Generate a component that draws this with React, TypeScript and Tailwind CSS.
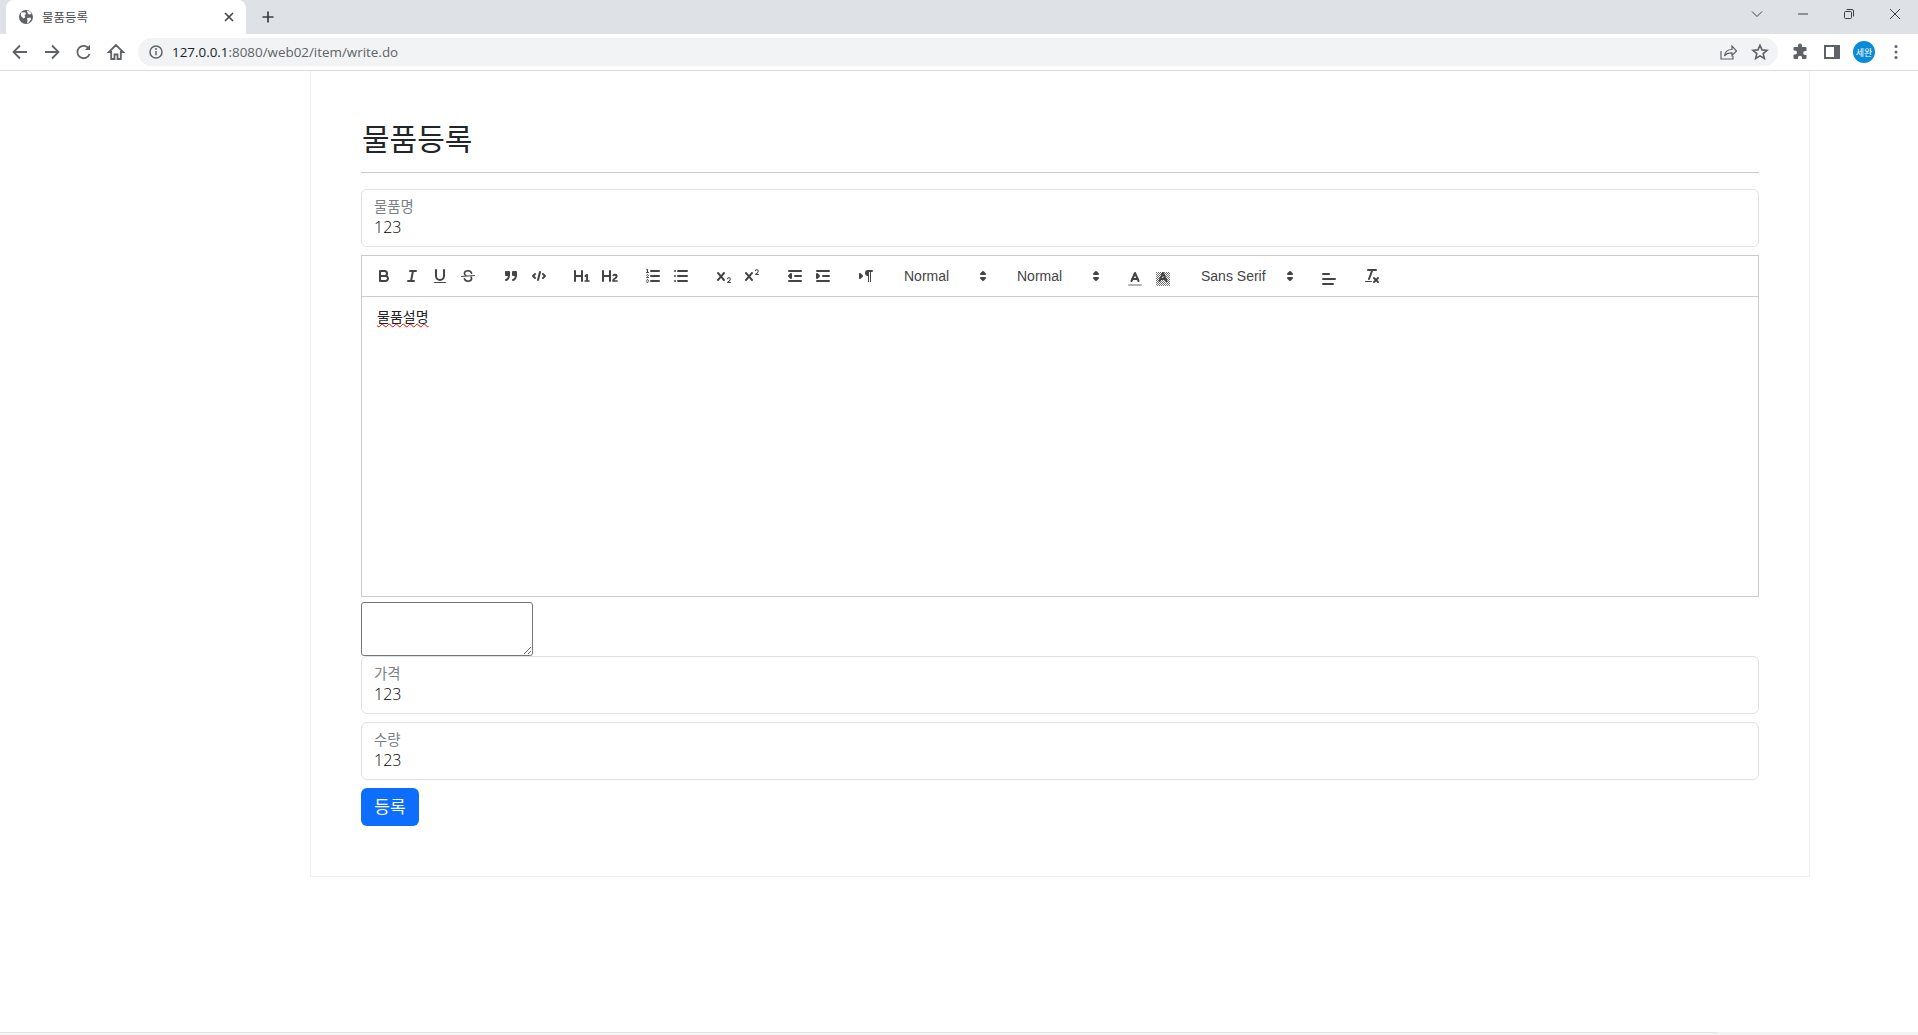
import React from "react";

const F = { fill: "#444", stroke: "none" };
const T = { strokeWidth: 1 };

const Q: Record<string, React.ReactNode> = {
  bold: (
    <>
      <path d="M5,4H9.5A2.5,2.5,0,0,1,12,6.5v0A2.5,2.5,0,0,1,9.5,9H5A0,0,0,0,1,5,9V4A0,0,0,0,1,5,4Z" />
      <path d="M5,9h5.5A2.5,2.5,0,0,1,13,11.5v0A2.5,2.5,0,0,1,10.5,14H5a0,0,0,0,1,0,0V9A0,0,0,0,1,5,9Z" />
    </>
  ),
  italic: (
    <>
      <line x1="7" x2="13" y1="4" y2="4" />
      <line x1="5" x2="11" y1="14" y2="14" />
      <line x1="8" x2="10" y1="14" y2="4" />
    </>
  ),
  underline: (
    <>
      <path d="M5,3V9a4.012,4.012,0,0,0,4,4H9a4.012,4.012,0,0,0,4-4V3" />
      <rect {...F} height="1" rx=".5" ry=".5" width="12" x="3" y="15" />
    </>
  ),
  strike: (
    <>
      <line {...T} x1="15.5" x2="2.5" y1="8.5" y2="9.5" />
      <path strokeWidth={1.6} d="M12.6 6.2C12.2 4.7 10.8 3.8 9 3.8 6.9 3.8 5.4 4.8 5.4 6.4c0 .9.5 1.6 1.3 2M5.4 11.8c.4 1.5 1.8 2.4 3.6 2.4 2.1 0 3.6-1 3.6-2.6 0-.6-.2-1.1-.6-1.6" />
    </>
  ),
  blockquote: (
    <>
      <rect fill="#444" height="3" width="3" x="4" y="5" />
      <rect fill="#444" height="3" width="3" x="11" y="5" />
      <path d="M7,8c0,4.031-3,5-3,5" />
      <path d="M14,8c0,4.031-3,5-3,5" />
    </>
  ),
  code: (
    <>
      <polyline points="5 7 3 9 5 11" />
      <polyline points="13 7 15 9 13 11" />
      <line x1="10" x2="8" y1="5" y2="13" />
    </>
  ),
  h1: (
    <path {...F} d="M10,4V14a1,1,0,0,1-2,0V10H3v4a1,1,0,0,1-2,0V4A1,1,0,0,1,3,4V8H8V4a1,1,0,0,1,2,0Zm6.06787,9.209H14.98975V7.59863a.54085.54085,0,0,0-.605-.60547h-.62744a1.01119,1.01119,0,0,0-.748.29688L11.645,8.56641a.5435.5435,0,0,0-.022.8584l.28613.30762a.53861.53861,0,0,0,.84717.0332l.09912-.08789a1.2137,1.2137,0,0,0,.2417-.35254h.02246s-.01123.30859-.01123.60547V13.209H12.041a.54085.54085,0,0,0-.605.60547v.43945a.54085.54085,0,0,0,.605.60547h4.02686a.54085.54085,0,0,0,.605-.60547v-.43945A.54085.54085,0,0,0,16.06787,13.209Z" />
  ),
  h2: (
    <path {...F} d="M16.73975,13.81445v.43945a.54085.54085,0,0,1-.605.60547H11.855a.58392.58392,0,0,1-.64893-.60547V14.0127c0-2.90527,3.39941-3.42187,3.39941-4.55469a.77675.77675,0,0,0-.84717-.78125,1.17684,1.17684,0,0,0-.83594.38477c-.2749.26367-.561.374-.85791.13184l-.4292-.34082c-.30811-.24219-.38525-.51758-.1543-.81445a2.97155,2.97155,0,0,1,2.45361-1.17676,2.45393,2.45393,0,0,1,2.68408,2.40918c0,2.45312-3.1792,2.92676-3.27832,3.93848h2.79443A.54085.54085,0,0,1,16.73975,13.81445ZM9,3A.99974.99974,0,0,0,8,4V8H3V4A1,1,0,0,0,1,4V14a1,1,0,0,0,2,0V10H8v4a1,1,0,0,0,2,0V4A.99974.99974,0,0,0,9,3Z" />
  ),
  ol: (
    <>
      <line x1="7" x2="15" y1="4" y2="4" />
      <line x1="7" x2="15" y1="9" y2="9" />
      <line x1="7" x2="15" y1="14" y2="14" />
      <line {...T} x1="2.5" x2="4.5" y1="5.5" y2="5.5" />
      <path {...F} d="M3.5,6A0.5,0.5,0,0,1,3,5.5V3.085l-0.276.138A0.5,0.5,0,0,1,2.053,3c-0.124-.247-0.023-0.324.224-0.447l1-.5A0.5,0.5,0,0,1,4,2.5v3A0.5,0.5,0,0,1,3.5,6Z" />
      <path {...T} d="M4.5,10.5h-2c0-.234,1.85-1.076,1.85-2.234A0.959,0.959,0,0,0,2.5,8.156" />
      <path {...T} d="M2.5,14.846a0.959,0.959,0,0,0,1.85-.109A0.7,0.7,0,0,0,3.75,14a0.688,0.688,0,0,0,.6-0.736,0.959,0.959,0,0,0-1.85-.109" />
    </>
  ),
  ul: (
    <>
      <line x1="6" x2="15" y1="4" y2="4" />
      <line x1="6" x2="15" y1="9" y2="9" />
      <line x1="6" x2="15" y1="14" y2="14" />
      <line x1="3" x2="3" y1="4" y2="4" />
      <line x1="3" x2="3" y1="9" y2="9" />
      <line x1="3" x2="3" y1="14" y2="14" />
    </>
  ),
  sub: (
    <>
      <path {...F} d="M15.5,15H13.861a3.858,3.858,0,0,0,1.914-2.975,1.8,1.8,0,0,0-1.6-1.751A1.921,1.921,0,0,0,12.021,11.7a0.50013,0.50013,0,1,0,.957.291h0a0.914,0.914,0,0,1,1.053-.725,0.81,0.81,0,0,1,.744.762c0,1.076-1.16971,1.86982-1.93971,2.43082A1.45639,1.45639,0,0,0,12,15.5a0.5,0.5,0,0,0,.5.5h3A0.5,0.5,0,0,0,15.5,15Z" />
      <path {...F} d="M9.65,5.241a1,1,0,0,0-1.409.108L6,7.964,3.759,5.349A1,1,0,0,0,2.192,6.59178Q2.21541,6.6213,2.241,6.649L4.684,9.5,2.241,12.35A1,1,0,0,0,3.71,13.70722q0.02557-.02768.049-0.05722L6,11.036,8.241,13.65a1,1,0,1,0,1.567-1.24277Q9.78459,12.3777,9.759,12.35L7.316,9.5,9.759,6.651A1,1,0,0,0,9.65,5.241Z" />
    </>
  ),
  sup: (
    <>
      <path {...F} d="M15.5,7H13.861a4.015,4.015,0,0,0,1.914-2.975,1.8,1.8,0,0,0-1.6-1.751A1.922,1.922,0,0,0,12.021,3.7a0.5,0.5,0,1,0,.957.291,0.917,0.917,0,0,1,1.053-.725,0.81,0.81,0,0,1,.744.762c0,1.077-1.164,1.925-1.934,2.486A1.423,1.423,0,0,0,12,7.5a0.5,0.5,0,0,0,.5.5h3A0.5,0.5,0,0,0,15.5,7Z" />
      <path {...F} d="M9.651,5.241a1,1,0,0,0-1.41.108L6,7.964,3.759,5.349a1,1,0,1,0-1.519,1.3L4.683,9.5,2.241,12.35a1,1,0,1,0,1.519,1.3L6,11.036,8.241,13.65a1,1,0,0,0,1.519-1.3L7.317,9.5,9.759,6.651A1,1,0,0,0,9.651,5.241Z" />
    </>
  ),
  outdent: (
    <>
      <line x1="3" x2="15" y1="14" y2="14" />
      <line x1="3" x2="15" y1="4" y2="4" />
      <line x1="9" x2="15" y1="9" y2="9" />
      <polyline fill="#444" strokeWidth={2} points="5 7 5 11 3 9 5 7" />
    </>
  ),
  indent: (
    <>
      <line x1="3" x2="15" y1="14" y2="14" />
      <line x1="3" x2="15" y1="4" y2="4" />
      <line x1="9" x2="15" y1="9" y2="9" />
      <polyline fill="#444" strokeWidth={2} points="3 7 3 11 5 9 3 7" />
    </>
  ),
  direction: (
    <>
      <polygon fill="#444" strokeWidth={2} points="3 11 5 9 3 7 3 11" />
      <line x1="15" x2="11" y1="4" y2="4" />
      <path {...F} d="M11,3a3,3,0,0,0,0,6h1V3H11Z" />
      <rect {...F} height="11" width="1" x="11" y="4" />
      <rect {...F} height="11" width="1" x="13" y="4" />
    </>
  ),
  color: (
    <g transform="translate(0 3)">
      <line x1="3" x2="15" y1="15" y2="15" opacity={0.4} />
      <polyline points="5.5 11 9 3 12.5 11" />
      <line x1="11.63" x2="6.38" y1="9" y2="9" />
    </g>
  ),
  background: (
    <g transform="translate(0 3)">
      {Array.from({ length: 14 * 14 }).map((_, i) => {
        const x = 2 + (i % 14);
        const y = 2 + Math.floor(i / 14);
        return (x + y) % 2 === 0 ? <rect key={i} fill="#000" stroke="none" opacity={0.55} x={x} y={y} width="1" height="1" /> : null;
      })}
      <polyline points="5.5 11 9 3 12.5 11" />
      <line x1="11.63" x2="6.38" y1="9" y2="9" />
    </g>
  ),
  align: (
    <g transform="translate(0 3)">
      <line x1="3" x2="15" y1="9" y2="9" />
      <line x1="3" x2="13" y1="14" y2="14" />
      <line x1="3" x2="9" y1="4" y2="4" />
    </g>
  ),
  clean: (
    <>
      <line x1="5" x2="13" y1="3" y2="3" />
      <line x1="6" x2="9.35" y1="12" y2="3" />
      <line x1="11" x2="15" y1="11" y2="15" />
      <line x1="15" x2="11" y1="11" y2="15" />
      <rect {...F} height="1" rx=".5" ry=".5" width="7" x="2" y="14" />
    </>
  ),
};

const Btn = ({ n }: { n: string }) => (
  <div className="w-7 h-6 px-[5px] py-[3px] shrink-0 overflow-visible">
    <svg width="18" height="18" viewBox="0 0 18 18" overflow="visible" fill="none" stroke="#444" strokeWidth={2} strokeLinecap="round" strokeLinejoin="round" className="block">
      {Q[n]}
    </svg>
  </div>
);

const Picker = ({ label, w }: { label: string; w: string }) => (
  <div className={`${w} h-6 mr-[15px] pl-[9px] pr-px flex items-center justify-between shrink-0 text-[14px] font-medium text-[#444] font-['Liberation_Sans','Noto_Sans_CJK_KR',sans-serif]`}>
    <span>{label}</span>
    <svg width="18" height="18" viewBox="0 0 18 18" className="block" fill="#444" stroke="#444" strokeWidth={2} strokeLinejoin="round">
      <polygon points="7 11 9 13 11 11 7 11" />
      <polygon points="7 7 9 5 11 7 7 7" />
    </svg>
  </div>
);

const Group = ({ items }: { items: string[] }) => (
  <div className="flex mr-[15px] shrink-0">
    {items.map((i) => (
      <Btn key={i} n={i} />
    ))}
  </div>
);

const Field = ({ label, value, className = "" }: { label: string; value: string; className?: string }) => (
  <div className={`h-[58px] border border-[#dee2e6] rounded-md px-3 pt-[8px] ${className}`}>
    <div className="text-[14.4px] leading-[18px] text-[#7b8188]">{label}</div>
    <div className="text-[16px] leading-[24px] -mt-px font-light text-black">{value}</div>
  </div>
);

const G = "#5f6368";

const Globe = () => (
  <svg width="16" height="16" viewBox="0 0 16 16" className="block">
    <circle cx="8" cy="8" r="7" fill="#5f6368" />
    <path d="M3 3.5 7 3.2 8 5 6.5 6.5 7.5 8 5.5 9.5 3 7ZM9 1.8l3 .7 1.5 2.5-2.5.5-1.5-1.5ZM9 9l3.5-.5.5 2-2.500 3.200L9 14l.5-2.500Z" fill="#fff" />
  </svg>
);

const NavIcon = ({ children }: { children: React.ReactNode }) => (
  <div className="w-8 h-8 flex items-center justify-center shrink-0">
    <svg width="20" height="20" viewBox="0 0 20 20" fill="none" stroke={G} strokeWidth={1.8} className="block">
      {children}
    </svg>
  </div>
);

const Win = ({ children }: { children: React.ReactNode }) => (
  <div className="w-[46px] h-7 flex items-center justify-center shrink-0">
    <svg width="12" height="12" viewBox="0 0 12 12" fill="none" stroke="#3c4043" strokeWidth={1} className="block">
      {children}
    </svg>
  </div>
);

export default function App() {
  return (
    <div className="h-[1035px] w-[1918px] overflow-hidden flex flex-col bg-white font-['Open_Sans','Noto_Sans_CJK_KR',sans-serif] text-[#212529]">
      {/* tab strip */}
      <div className="h-[34px] bg-[#dee1e6] flex items-end shrink-0">
        <div className="ml-[6px] w-[240px] h-[34px] bg-white rounded-t-[8px] flex items-center pl-[12px] pr-[9px] shrink-0 relative">
          <Globe />
          <span className="ml-[8px] text-[12.500px] text-[#45484c] font-['Noto_Sans_CJK_KR',sans-serif]">물품등록</span>
          <svg width="16" height="16" viewBox="0 0 16 16" className="ml-auto block" stroke="#45484c" strokeWidth={1.7}>
            <path d="M4 4l8 8M12 4l-8 8" />
          </svg>
        </div>
        <div className="ml-[14px] h-[34px] flex items-center shrink-0">
          <svg width="16" height="16" viewBox="0 0 16 16" className="block" stroke="#3c4043" strokeWidth={1.7}>
            <path d="M8 2.500v11M2.500 8h11" />
          </svg>
        </div>
        <div className="ml-auto flex h-[28px] self-start items-center">
          <div className="w-8 flex justify-center mr-[7px]">
            <svg width="14" height="14" viewBox="0 0 14 14" fill="none" stroke="#3c4043" strokeWidth={1} className="block">
              <path d="M2 4.500l5 5 5-5" />
            </svg>
          </div>
          <Win><path d="M1 6h10" /></Win>
          <Win>
            <rect x="1.500" y="3.500" width="7" height="7" rx="1" />
            <path d="M3.500 1.500h5.500a1.500 1.500 0 0 1 1.500 1.500v5.500" />
          </Win>
          <Win><path d="M1 1l10 10M11 1L1 11" /></Win>
        </div>
      </div>

      {/* toolbar */}
      <div className="h-[37px] shrink-0 bg-white border-b border-[#dadce0] flex items-start pt-[2px] pl-1 pr-[6px]">
        <NavIcon><path d="M17 10H4M10 3.500 3.500 10l6.500 6.500" /></NavIcon>
        <NavIcon><path d="M3 10h13M10 3.500l6.500 6.500-6.500 6.500" /></NavIcon>
        <NavIcon>
          <path d="M15.500 12a6.200 6.200 0 1 1-.6-5.200" />
          <path d="M16 2.800V8h-5.200z" fill={G} stroke="none" />
        </NavIcon>
        <NavIcon><path d="M10 3 2.800 10h2.400v7h3.300v-4.500h3V17h3.300v-7h2.400z" strokeLinejoin="miter" /></NavIcon>
        <div className="ml-[6px] mt-[2px] w-[1640px] h-7 bg-[#f1f3f4] rounded-full flex items-center pl-[10px] pr-[8px] shrink-0">
          <svg width="16" height="16" viewBox="0 0 16 16" className="block" fill="none">
            <circle cx="8" cy="8" r="6" stroke={G} strokeWidth="1.500" />
            <path d="M8 7v4.200" stroke={G} strokeWidth="1.500" />
            <circle cx="8" cy="5" r="1" fill={G} />
          </svg>
          <span className="ml-[8px] text-[13.400px] leading-[20px] text-[#5f6368]">
            <span className="text-[#202124]">127.0.0.1</span>:8080/web02/item/write.do
          </span>
          <div className="ml-auto flex items-center gap-[12px]">
            <svg width="20" height="20" viewBox="0 0 20 20" fill="none" stroke={G} strokeWidth="1.200" className="block">
              <path d="M3 9v8h12v-3" />
              <path d="M6.500 14c.5-4 3.500-6.500 7.500-6.500V4l4.500 5-4.500 4.500V10.800c-3 0-6 .8-7.500 3.200z" />
            </svg>
            <svg width="20" height="20" viewBox="0 0 20 20" fill="none" stroke={G} strokeWidth="1.600" className="block">
              <path d="M10 3.300l2 4.600 5 .4-3.800 3.300 1.200 4.900L10 13.900l-4.400 2.600 1.200-4.900L3 8.300l5-.4z" />
            </svg>
          </div>
        </div>
        <div className="ml-[6px] flex">
          <div className="w-8 h-8 flex items-center justify-center">
            <svg width="18" height="18" viewBox="0 0 18 18" className="block" fill={G}>
              <path d="M7 2.500a2 2 0 0 1 4 0V4h3.500a1 1 0 0 1 1 1v3h-1.300a2 2 0 0 0 0 4h1.300v3a1 1 0 0 1-1 1H11v-1.300a2 2 0 0 0-4 0V16H3.500a1 1 0 0 1-1-1v-3.500H4a2 2 0 0 0 0-4H2.500V5a1 1 0 0 1 1-1H7z" />
            </svg>
          </div>
          <div className="w-8 h-8 flex items-center justify-center">
            <svg width="16" height="14" viewBox="0 0 16 14" className="block">
              <rect x="0" y="0" width="16" height="14" fill={G} />
              <rect x="2" y="2" width="8" height="10" fill="#fff" />
            </svg>
          </div>
          <div className="w-8 h-8 flex items-center justify-center">
            <div className="w-[22px] h-[22px] rounded-full bg-[#0b8ad8] flex items-center justify-center text-white text-[9px] leading-none font-['Noto_Sans_CJK_KR',sans-serif]">
              세완
            </div>
          </div>
          <div className="w-8 h-8 flex items-center justify-center">
            <svg width="4" height="16" viewBox="0 0 4 16" className="block" fill={G}>
              <circle cx="2" cy="2.500" r="1.500" />
              <circle cx="2" cy="8" r="1.500" />
              <circle cx="2" cy="13.500" r="1.500" />
            </svg>
          </div>
        </div>
      </div>

      {/* page */}
      <div className="flex-1 min-h-0 relative">
        <div className="ml-[310px] w-[1500px] border border-t-0 border-[#eeeff1] p-[50px] pt-[49px]">
          <h3 className="text-[30px] leading-[34px] font-normal font-['Noto_Sans_CJK_KR',sans-serif] text-[#212529] mb-[18px] pl-px">물품등록</h3>
          <div className="border-t border-[#ccc] mb-4" />
          <Field label="물품명" value="123" className="mb-2" />
          <div className="border border-[#ccc] p-2 flex items-center h-[42px]">
            <Group items={["bold", "italic", "underline", "strike"]} />
            <Group items={["blockquote", "code"]} />
            <Group items={["h1", "h2"]} />
            <Group items={["ol", "ul"]} />
            <Group items={["sub", "sup"]} />
            <Group items={["outdent", "indent"]} />
            <Group items={["direction"]} />
            <Picker label="Normal" w="w-[98px]" />
            <Picker label="Normal" w="w-[98px]" />
            <Group items={["color", "background"]} />
            <Picker label="Sans Serif" w="w-[108px]" />
            <Group items={["align"]} />
            <Group items={["clean"]} />
          </div>
          <div className="h-[300px] border border-t-0 border-[#ccc] px-[15px] pt-[10px] text-[14px] leading-[20px] text-[#222] font-['Liberation_Sans','Noto_Sans_CJK_KR',sans-serif]">
            <span className="underline decoration-wavy decoration-[#ff0000] decoration-1 underline-offset-1">물품설명</span>
          </div>
          <textarea readOnly className="block mt-[5px] w-[172px] h-[54px] border border-[#767676] rounded-[3px] bg-white resize" />
          <Field label="가격" value="123" className="mb-2" />
          <Field label="수량" value="123" className="mb-2" />
          <button className="w-[58px] h-[38px] rounded-md bg-[#0d6efd] text-white text-[17px] flex items-center justify-center">등록</button>
        </div>
      </div>
      <div className="h-[3px] shrink-0 bg-[#f3f3f3]">
        <div className="h-px w-[1717px] bg-[#e2e2e2]" />
      </div>
    </div>
  );
}
